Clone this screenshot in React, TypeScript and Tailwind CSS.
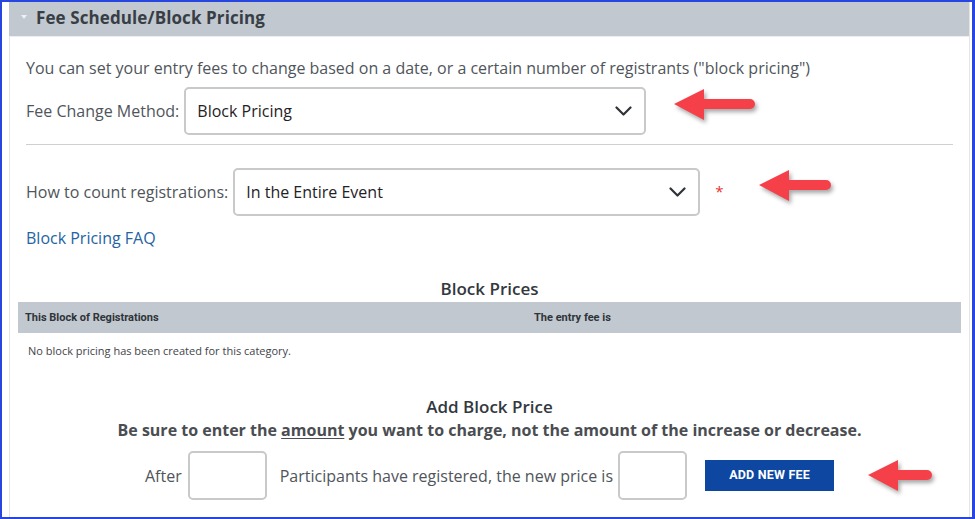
import React from "react"

function Arrow({ width, className = "" }: { width: number; className?: string }) {
  const w = width
  return (
    <svg
      width={w + 6}
      height={36}
      viewBox={`0 0 ${w + 6} 36`}
      className={`drop-shadow-[2px_3px_2px_rgba(0,0,0,0.35)] ${className}`}
    >
      <path
        d={`M1 15 L31 0 L31 10 L${w - 5} 10 A5 5 0 0 1 ${w - 5} 20 L31 20 L31 31 Z`}
        fill="#f5404a"
      />
    </svg>
  )
}

function Chevron() {
  return (
    <svg width="17" height="10" viewBox="0 0 17 10" className="shrink-0">
      <polyline points="1.5,1.5 8.5,8.5 15.5,1.5" fill="none" stroke="#2f3338" strokeWidth="2.2" strokeLinecap="round" strokeLinejoin="round" />
    </svg>
  )
}

function Select({ value, width }: { value: string; width: string }) {
  return (
    <div
      className={`${width} h-[48px] flex items-center justify-between pl-[11px] pr-[12px] border-2 border-[#c9c9c9] rounded-[5px] bg-white text-[16px] text-[#1f2226]`}
    >
      <span>{value}</span>
      <Chevron />
    </div>
  )
}

export default function App() {
  return (
    <div
      className="w-[975px] h-[519px] overflow-hidden bg-white border-[#2646df] border-l-2 border-t-2 border-b-2 border-r-[3px] pl-[7px] pr-[2px]"
      style={{ fontFamily: '"Open Sans", "Liberation Sans", sans-serif' }}
    >
      <div className="h-full border-x border-[#e4e4e4]">
        {/* Header */}
        <div className="-ml-px h-[34px] bg-[#c1c8cf] border-b border-[#eceef0] flex items-center box-content">
          <svg width="6" height="4" viewBox="0 0 6 4" className="ml-[12px] mt-[-5px]">
            <polygon points="0,0 6,0 3,4" fill="#eef1f4" />
          </svg>
          <span className="ml-[9px] -mt-[2px] text-[17px] font-bold text-[#383e45] tracking-[0.1px]">
            Fee Schedule/Block Pricing
          </span>
        </div>

        <div className="px-4 text-[#50555b]">
          <p className="pt-[19px] text-[16px] leading-[24px]">
            You can set your entry fees to change based on a date, or a certain number of registrants ("block pricing")
          </p>

          <div className="mt-[7px] flex items-center text-[16px]">
            <span>Fee Change Method:</span>
            <div className="ml-[5px]">
              <Select value="Block Pricing" width="w-[462px]" />
            </div>
            <Arrow width={82} className="ml-[27px] relative -top-[4px]" />
          </div>

          <div className="mt-[9px] h-px bg-[#cfcfcf]" />

          <div className="mt-[23px] flex items-center text-[16px]">
            <span>How to count registrations:</span>
            <div className="ml-[5px]">
              <Select value="In the Entire Event" width="w-[467px]" />
            </div>
            <span className="ml-[15px] text-[#e8322f] text-[15px] relative -top-[1px]">*</span>
            <Arrow width={73} className="ml-[34px] relative -top-[4px]" />
          </div>

          <p className="mt-[10px] text-[16px] leading-[24px] text-[#2563a3]">Block Pricing FAQ</p>

          <h3 className="mt-[27px] text-center text-[17px] leading-[24px] font-semibold text-[#33383e]">
            Block Prices
          </h3>

          <div className="-mx-2 mt-[1px]">
            <div
              className="h-[31px] bg-[#c1c8cf] grid grid-cols-[509px_1fr] items-center px-[7px] pt-[2px] text-[11px] font-bold text-[#2f3439]"
              style={{ fontFamily: 'Roboto, "Liberation Sans", sans-serif' }}
            >
              <span>This Block of Registrations</span>
              <span>The entry fee is</span>
            </div>
            <p className="mt-[10px] pl-[10px] text-[11px] leading-[16px] text-[#3f4449]">
              No block pricing has been created for this category.
            </p>
          </div>

          <h3 className="mt-[37px] text-center text-[17px] leading-[22px] font-semibold text-[#33383e]">
            Add Block Price
          </h3>
          <p className="text-center text-[16px] leading-[24px] font-bold text-[#4a4d51]">
            Be sure to enter the <span className="underline underline-offset-2">amount</span> you want to charge, not the amount of the increase or decrease.
          </p>

          <div className="mt-[9px] flex items-center justify-center text-[16px]">
            <span>After</span>
            <div className="ml-[6px] w-[79px] h-[49px] border-2 border-[#c9c9c9] rounded-[5px] bg-white" />
            <span className="ml-[13px]">Participants have registered, the new price is</span>
            <div className="ml-[5px] w-[69px] h-[49px] border-2 border-[#c9c9c9] rounded-[5px] bg-white" />
            <div className="relative ml-[18px]">
              <button
                className="w-[129px] h-[31px] bg-[#0d47a1] text-white text-[12.5px] font-bold tracking-[0.2px]"
                style={{ fontFamily: 'Roboto, "Liberation Sans", sans-serif' }}
              >
                ADD NEW FEE
              </button>
              <Arrow width={65} className="absolute left-full ml-[33px] top-[0px]" />
            </div>
          </div>
        </div>
      </div>
    </div>
  )
}
